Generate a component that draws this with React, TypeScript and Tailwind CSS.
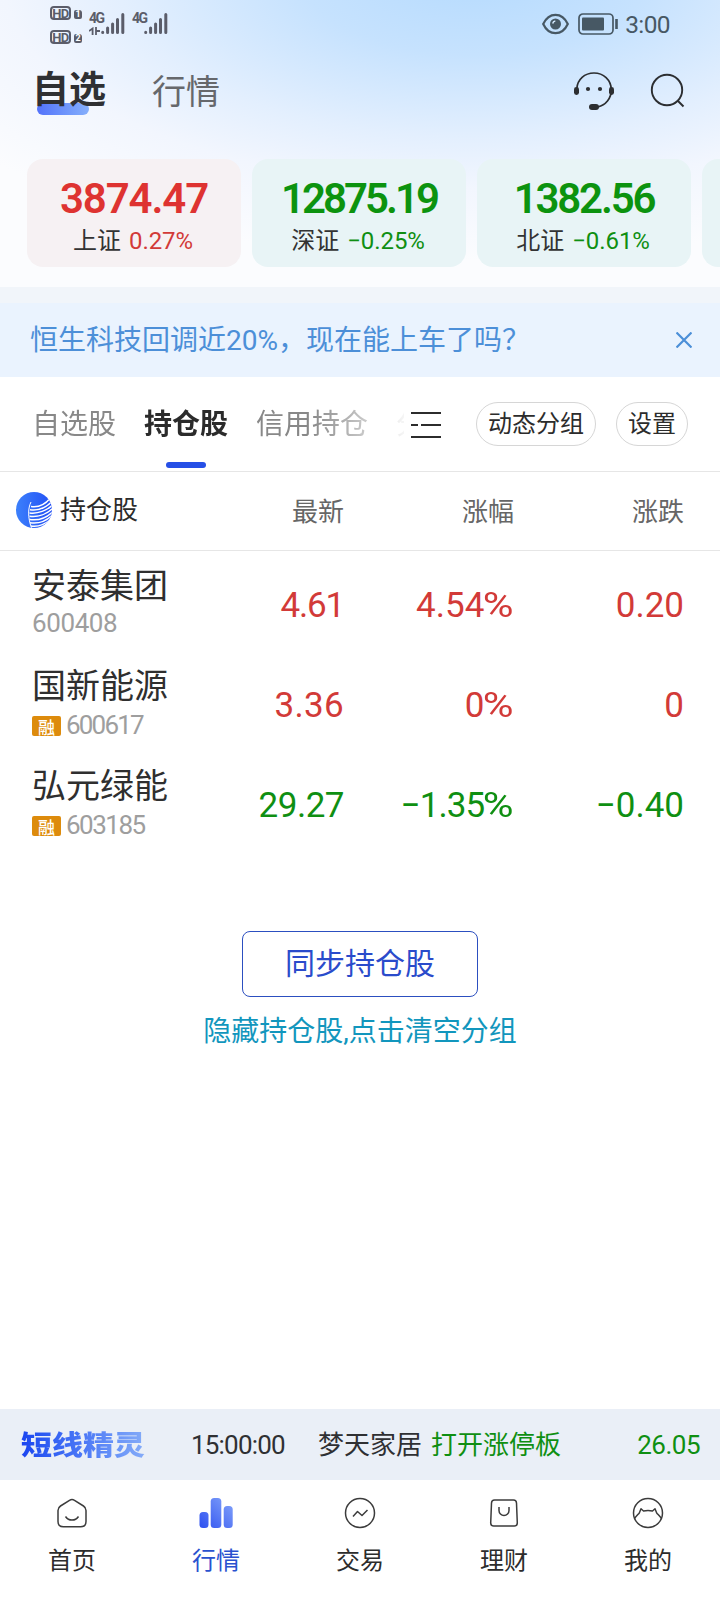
import React from 'react';

const RED = 'text-[#d23a38]';
const GREEN = 'text-[#0f8f12]';

const indices = [
  { name: '上证', value: '3874.47', change: '0.27%', up: true, tracking: 'tracking-[-1.1px]' },
  { name: '深证', value: '12875.19', change: '−0.25%', up: false, tracking: 'tracking-[-3px]' },
  { name: '北证', value: '1382.56', change: '−0.61%', up: false, tracking: 'tracking-[-2.2px]' },
];

const stocks = [
  {
    name: '安泰集团', code: '600408', margin: false, up: true, codeTracking: 'tracking-[-0.4px]',
    price: '4.61', percent: '4.54', diff: '0.20',
    priceTracking: 'tracking-[-1.2px]', percentTracking: 'tracking-normal', diffTracking: 'tracking-normal',
  },
  {
    name: '国新能源', code: '600617', margin: true, up: true, codeTracking: 'tracking-[-1.8px]',
    price: '3.36', percent: '0', diff: '0',
    priceTracking: 'tracking-[0.3px]', percentTracking: 'tracking-normal', diffTracking: 'tracking-normal',
  },
  {
    name: '弘元绿能', code: '603185', margin: true, up: false, codeTracking: 'tracking-[-1.5px]',
    price: '29.27', percent: '−1.35', diff: '−0.40',
    priceTracking: 'tracking-[-0.5px]', percentTracking: 'tracking-[-0.9px]', diffTracking: 'tracking-normal',
  },
];

const SignalBars = () => (
  <svg width="24" height="24" viewBox="0 0 24 24" fill="none" stroke="currentColor" strokeWidth="3" strokeLinecap="round">
    <path d="M1.7 20.3v.2M6.6 16v4.5M11.6 12v8.5M16.5 7.5v13M21.8 2.5v18" />
  </svg>
);

const HdBadge = ({ slot }: { slot: string }) => (
  <div className="flex h-[14px] items-end gap-[3px]">
    <span className="flex h-[14px] w-[21px] items-center justify-center rounded-[4px] border-2 border-current text-[13px] leading-none font-bold tracking-[-0.5px]">
      HD
    </span>
    <span className="mb-px flex h-[9px] w-[8px] items-center justify-center rounded-[2px] rounded-tr-[3px] bg-current">
      <span className="text-[9px] leading-none font-bold text-white">{slot}</span>
    </span>
  </div>
);

const StatusBar = () => (
  <div className="flex h-12 items-start justify-between pr-[50px] pl-[50px]">
    <div className="flex text-[#5b5d6a]">
      <div className="mt-[6px] flex w-[32px] flex-col gap-[10px]">
        <HdBadge slot="1" />
        <HdBadge slot="2" />
      </div>
      <div className="mt-[12px] ml-[7px] flex w-[12px] flex-col">
        <span className="text-[14px] leading-[13px] font-bold tracking-[-1.5px]">4G</span>
        <svg className="mt-[2px]" width="12" height="9" viewBox="0 0 12 9" fill="none" stroke="currentColor" strokeWidth="1.8">
          <path d="M0 4l3.600-2.500V8M7 0v8M7 4h4" />
        </svg>
      </div>
      <div className="mt-[12px]"><SignalBars /></div>
      <span className="mt-[12px] ml-[7px] w-[12px] text-[14px] leading-[13px] font-bold tracking-[-1.5px]">4G</span>
      <div className="mt-[12px]"><SignalBars /></div>
    </div>
    <div className="flex h-12 items-center text-[#475864]">
      <svg width="27" height="22" viewBox="0 0 27 22" fill="none" stroke="currentColor" strokeWidth="2.200">
        <path d="M1.200 11C4 5 8.300 1.800 13.500 1.800S23 5 25.800 11C23 17 18.700 20.200 13.500 20.200S4 17 1.200 11z" />
        <circle cx="13.500" cy="11" r="5.500" fill="currentColor" stroke="none" />
        <path d="M10.700 10.500a3 3 0 0 1 2.600-2.400" stroke="#d5ebff" strokeWidth="1.500" />
      </svg>
      <svg className="ml-[9px]" width="41" height="22" viewBox="0 0 41 22" fill="none">
        <rect x="1" y="1" width="34" height="20" rx="4" stroke="currentColor" strokeWidth="1.700" />
        <rect x="4" y="4.500" width="22" height="13" rx="1" fill="currentColor" />
        <path d="M38.500 6v10" stroke="currentColor" strokeWidth="2.600" />
      </svg>
      <span className="ml-[6px] pt-[2px] text-[24.5px] leading-none tracking-[-0.6px]">3:00</span>
    </div>
  </div>
);

const TitleRow = () => (
  <div className="flex h-[111px] items-start justify-between pr-[34px] pl-8">
    <div className="flex">
      <div className="relative isolate mt-[21px] w-[76px] text-[37px] leading-[44px] font-bold text-[#2f3033]">
        自选
        <span className="absolute top-[34px] left-[5px] -z-10 h-3 w-[52px] rounded-full bg-linear-to-r from-[#5472fa] to-[#86affb]" />
      </div>
      <div className="mt-[22px] ml-11 text-[34px] leading-[44px] text-[#66686c]">行情</div>
    </div>
    <div className="flex text-[#2c2e31]">
      <svg className="mt-[23px]" width="40" height="40" viewBox="0 0 40 40" fill="none" stroke="currentColor" strokeWidth="1.700">
        <path d="M2.800 17.500C3.500 8.500 10.500 2 20 2s17 7 17.300 16.500c.2 9-6 16-13.300 17.300" />
        <rect x="0" y="16" width="5" height="8" rx="2.400" fill="currentColor" stroke="none" />
        <rect x="35" y="16" width="5" height="8" rx="2.400" fill="currentColor" stroke="none" />
        <rect x="15" y="33" width="10" height="6" rx="3" fill="currentColor" stroke="none" />
        <circle cx="14" cy="18" r="2.100" fill="currentColor" stroke="none" />
        <circle cx="26" cy="18" r="2.100" fill="currentColor" stroke="none" />
      </svg>
      <svg className="mt-[25px] ml-[36px]" width="36" height="36" viewBox="0 0 36 36" fill="none" stroke="currentColor" strokeWidth="1.900">
        <circle cx="17" cy="17" r="15.200" />
        <path d="M27.500 27.500l6 6" />
      </svg>
    </div>
  </div>
);

const IndexCards = () => (
  <div className="flex gap-[11px] overflow-hidden pl-[27px]">
    {indices.map((item) => (
      <div
        key={item.name}
        className={`flex h-[108px] w-[214px] shrink-0 flex-col items-center rounded-2xl ${item.up ? 'bg-[#f6f1f3]' : 'bg-[#e8f4f6]'}`}
      >
        <div className={`mt-[18px] text-[42px] leading-[44px] font-semibold ${item.tracking} ${item.up ? 'text-[#de3331]' : 'text-[#0c930f]'}`}>
          {item.value}
        </div>
        <div className="mt-[4px] mr-[2px] flex items-center gap-[8px] text-[24px] leading-[32px]">
          <span className="text-[#333]">{item.name}</span>
          <span className={`tracking-[-0.1px] ${item.up ? RED : GREEN}`}>{item.change}</span>
        </div>
      </div>
    ))}
    <div className="h-[108px] w-[214px] shrink-0 rounded-2xl bg-[#e8f4f6]" />
  </div>
);

const GroupTabs = () => (
  <div className="flex h-[95px] items-start border-b border-[#e6e6e6]">
    <div className="flex h-[94px] w-[404px] gap-7 overflow-hidden pl-8 text-[28px] leading-[40px] whitespace-nowrap text-[#888] [mask-image:linear-gradient(90deg,#000_310px,transparent_412px)]">
      <span className="mt-[28px]">自选股</span>
      <span className="flex flex-col items-center font-bold text-[#2b2b2b]">
        <span className="mt-[28px]">持仓股</span>
        <span className="mt-[17px] h-[6px] w-10 rounded-full bg-[#264fe6]" />
      </span>
      <span className="mt-[28px]">信用持仓</span>
      <span className="mt-[28px]">分</span>
    </div>
    <svg className="mt-[34px] ml-[7px]" width="30" height="28" viewBox="0 0 30 28" fill="none" stroke="#2c2c2c" strokeWidth="2">
      <path d="M0 2h30M0 14h7M10 14h20M0 26h30" />
    </svg>
    <button className="mt-[25px] ml-[35px] h-11 w-[120px] rounded-full border border-[#d6d6d6] text-[24px] leading-none text-[#2c2c2c]">
      动态分组
    </button>
    <button className="mt-[25px] ml-5 h-11 w-[72px] rounded-full border border-[#d6d6d6] text-[24px] leading-none text-[#2c2c2c]">
      设置
    </button>
  </div>
);

const BrandMark = () => (
  <svg width="36" height="36" viewBox="0 0 36 36" fill="none">
    <defs>
      <linearGradient id="brand" x1="0" y1="0" x2="1" y2="0">
        <stop offset="0" stopColor="#3c80fb" />
        <stop offset="1" stopColor="#2350f5" />
      </linearGradient>
      <clipPath id="brandClip">
        <circle cx="18" cy="18" r="18" />
      </clipPath>
    </defs>
    <circle cx="18" cy="18" r="18" fill="url(#brand)" />
    <g clipPath="url(#brandClip)" stroke="#fff" strokeWidth="1.400">
      <path d="M15 10C12 16 11.500 25 15.500 36" strokeWidth="1" />
      <path d="M15 14.500C22 15.500 29 12.500 34 6.500" />
      <path d="M14 17.700C22 19 30 15.500 36 9.500" />
      <path d="M13.500 21C22 22.200 31 18.500 37 12.500" />
      <path d="M13.500 24.200C22 25.500 31 22 37 16" />
      <path d="M13.500 27.500C22 28.700 31 25.500 37 19.500" />
      <path d="M14 30.700C22 32 30 29 36 23.500" />
      <path d="M15 34C22 35 28 33 34 28" />
    </g>
  </svg>
);

const StockTable = () => (
  <div>
    <div className="flex h-[79px] items-center border-b border-[#e6e6e6] text-[26px] leading-[36px] text-[#666]">
      <div className="flex w-[190px] items-center pb-[3px] pl-4">
        <BrandMark />
        <span className="ml-2 text-[#2c2c2c]">持仓股</span>
      </div>
      <span className="w-[154px] pt-[2px] text-right">最新</span>
      <span className="w-[170px] pt-[2px] text-right">涨幅</span>
      <span className="w-[170px] pt-[2px] text-right">涨跌</span>
    </div>
    {stocks.map((stock) => (
      <div key={stock.code} className={`flex h-[100px] text-[35px] leading-[44px] ${stock.up ? RED : GREEN}`}>
        <div className="w-[190px] pl-8">
          <div className="mt-[13px] text-[34px] leading-[44px] text-[#2f2f2f]">{stock.name}</div>
          <div className={`flex h-8 items-center text-[#9e9e9e] ${stock.margin ? '' : '-mt-[2px]'}`}>
            {stock.margin && (
              <span className="mt-[4px] mr-[5px] flex h-5 w-[29px] items-center justify-center overflow-hidden rounded-[2px] bg-[#dd8b0c] pt-[4px] text-[17px] leading-none font-medium text-white">
                融
              </span>
            )}
            <span className={`pt-[2px] text-[26px] leading-8 ${stock.codeTracking}`}>{stock.code}</span>
          </div>
        </div>
        <span className={`mt-[33px] w-[154px] text-right ${stock.priceTracking}`}>{stock.price}</span>
        <span className="mt-[33px] flex w-[170px] justify-end">
          <span className={stock.percentTracking}>{stock.percent}</span>
          <span className="ml-1 origin-right scale-x-[1.2]">%</span>
        </span>
        <span className={`mt-[33px] w-[170px] text-right ${stock.diffTracking}`}>{stock.diff}</span>
      </div>
    ))}
  </div>
);

const Ticker = () => (
  <div className="flex h-[71px] items-center bg-[#eaeff7] pr-[20px] pl-[21px] text-[26px] leading-none whitespace-nowrap text-[#2f3033]">
    <span className="w-[125px] scale-y-[0.87] bg-linear-to-r from-[#1c45f0] via-[#4c78f6] to-[#86acf8] bg-clip-text pt-[2px] text-[31px] leading-[36px] font-black text-transparent">
      短线精灵
    </span>
    <span className="ml-[45px] w-[95px] tracking-[-0.8px]">15:00:00</span>
    <span className="ml-[32px]">梦天家居</span>
    <span className={`ml-[9px] ${GREEN}`}>打开涨停板</span>
    <span className={`ml-auto tracking-[-0.5px] ${GREEN}`}>26.05</span>
  </div>
);

const navItems = [
  {
    label: '首页',
    icon: (
      <>
        <path d="M13.500 3.300Q16 1.700 18.500 3.300L27.500 9Q30 10.600 30 13.500V24.500Q30 29.800 24.700 29.800H7.300Q2 29.800 2 24.500V13.500Q2 10.600 4.500 9z" />
        <path d="M9.500 19.500c3.300 4.800 9.700 4.800 13 0" />
      </>
    ),
  },
  {
    label: '行情',
    active: true,
    icon: (
      <>
        <defs>
          <linearGradient id="bars" x1="0" y1="32" x2="32" y2="0" gradientUnits="userSpaceOnUse">
            <stop offset="0" stopColor="#2c4ff0" />
            <stop offset="1" stopColor="#86a6fa" />
          </linearGradient>
        </defs>
        <g fill="url(#bars)" stroke="none">
          <rect x="-0.500" y="15" width="9" height="16" rx="3.500" />
          <rect x="10.700" y="1" width="10.600" height="30" rx="3.500" />
          <rect x="23.700" y="9" width="9" height="22" rx="3.500" />
        </g>
      </>
    ),
  },
  {
    label: '交易',
    icon: (
      <>
        <circle cx="16" cy="16" r="14.500" />
        <path d="M9 19.500l4.500-5 4.500 4L23.500 13" />
      </>
    ),
  },
  {
    label: '理财',
    icon: (
      <>
        <path d="M6.500 3H25.500Q28.300 3 28.500 6L29.300 26Q29.300 29 26.300 29H5.700Q2.700 29 2.700 26L3.500 6Q3.700 3 6.500 3z" />
        <path d="M11 10v3.500a5 5 0 0 0 10 0V10" />
      </>
    ),
  },
  {
    label: '我的',
    icon: (
      <>
        <circle cx="16" cy="16" r="14.500" />
        <path d="M2.500 21.500C4 19.500 6 17.500 7.300 16L9 11.800L11.500 14Q16 12.800 20.500 14L23 11.800L24.700 16C26 17.500 28 19.500 29.500 21.500" />
      </>
    ),
  },
];

const BottomNav = () => (
  <nav className="grid h-[120px] grid-cols-5 bg-white">
    {navItems.map((item) => (
      <div key={item.label} className={`flex flex-col items-center ${item.active ? 'text-[#2a52cf]' : 'text-[#2c2c2c]'}`}>
        <svg className="mt-[17px] overflow-visible" width="32" height="32" viewBox="0 0 32 32" fill="none" stroke="#3c3c3c" strokeWidth="1.500" strokeLinejoin="round">
          {item.icon}
        </svg>
        <span className="mt-[16px] text-[24px] leading-[32px]">{item.label}</span>
      </div>
    ))}
  </nav>
);

export default function App() {
  return (
    <div className="flex h-[1600px] w-[720px] flex-col overflow-hidden bg-white font-['Roboto','Noto_Sans_CJK_SC',sans-serif]">
      <header className="h-[287px] bg-[radial-gradient(ellipse_80%_90%_at_66%_-8%,#b6dbfe_0%,#c6e2fe_30%,#e3effe_62%,#f2f6fe_82%,#fbfcfe_110%)]">
        <StatusBar />
        <TitleRow />
        <IndexCards />
      </header>
      <div className="h-4 bg-[#f1f5fa]" />
      <div className="flex h-[74px] items-center justify-between bg-[#eaf3fe] pr-7 pl-[30px] text-[28px] leading-none text-[#4c8fd8]">
        <span className="pt-[2px]">恒生科技回调近20%，现在能上车了吗？</span>
        <svg width="16" height="16" viewBox="0 0 16 16" stroke="currentColor" strokeWidth="2.200">
          <path d="M.5.5l15 15M15.500.5l-15 15" />
        </svg>
      </div>
      <GroupTabs />
      <StockTable />
      <div className="flex flex-1 flex-col items-center">
        <button className="mt-20 h-[66px] w-[236px] rounded-lg border border-[#2c4fc0] text-[30px] leading-none text-[#2a4bcb]">
          同步持仓股
        </button>
        <span className="mt-[15px] text-[28px] leading-[40px] text-[#1296bd]">隐藏持仓股,点击清空分组</span>
      </div>
      <Ticker />
      <BottomNav />
    </div>
  );
}
